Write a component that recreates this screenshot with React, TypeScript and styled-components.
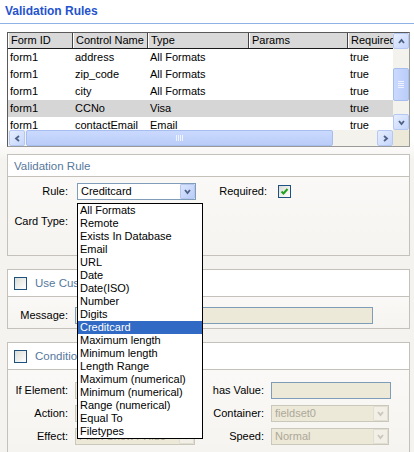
import React from "react";
import styled, { createGlobalStyle } from "styled-components";

const GlobalStyle = createGlobalStyle`
  body {
    margin: 0;
    background: #fff;
    font-family: "Liberation Sans", Arial, sans-serif;
    font-size: 11px;
    color: #000;
  }
`;

const columns = [
  { key: "formId", title: "Form ID", width: 65 },
  { key: "control", title: "Control Name", width: 75 },
  { key: "type", title: "Type", width: 101 },
  { key: "params", title: "Params", width: 99 },
  { key: "required", title: "Required", width: 70 },
];

const rows = [
  { formId: "form1", control: "address", type: "All Formats", params: "", required: "true" },
  { formId: "form1", control: "zip_code", type: "All Formats", params: "", required: "true" },
  { formId: "form1", control: "city", type: "All Formats", params: "", required: "true" },
  { formId: "form1", control: "CCNo", type: "Visa", params: "", required: "true", selected: true },
  { formId: "form1", control: "contactEmail", type: "Email", params: "", required: "true" },
];

const ruleOptions = [
  "All Formats",
  "Remote",
  "Exists In Database",
  "Email",
  "URL",
  "Date",
  "Date(ISO)",
  "Number",
  "Digits",
  "Creditcard",
  "Maximum length",
  "Minimum length",
  "Length Range",
  "Maximum (numerical)",
  "Minimum (numerical)",
  "Range (numerical)",
  "Equal To",
  "Filetypes",
];

const Page = styled.div`
  width: 414px;
  height: 452px;
  overflow: hidden;
  background: linear-gradient(#ffffff 0px, #ffffff 140px, #f4f3f0 160px);
`;

const Title = styled.div`
  height: 19px;
  padding: 4px 0 0 5px;
  border-bottom: 1px solid #8db2e3;
  font-size: 12px;
  font-weight: bold;
  line-height: 14px;
  color: #2553cc;
`;

const Content = styled.div`
  display: flex;
  flex-direction: column;
  padding: 8px 4px 0 7px;
`;

const TableBox = styled.div`
  height: 113px;
  display: grid;
  grid-template-columns: 1fr 16px;
  grid-template-rows: 1fr 16px;
  border: 1px solid #9a9a9a;
  border-top-color: #5a5a5a;
  border-left-color: #5a5a5a;
  background: #fff;
`;

const Viewport = styled.div`
  overflow: hidden;
`;

const HeadRow = styled.div`
  display: flex;
  height: 15px;
  border-bottom: 1px solid #1a1a1a;
`;

const HeadCell = styled.div<{ $w: number }>`
  flex: 0 0 ${(p) => p.$w}px;
  box-sizing: border-box;
  padding-left: 2px;
  background: #d9d9d9;
  border-left: 1px solid #fff;
  border-right: 1px solid #444;
  line-height: 15px;
  white-space: nowrap;
  overflow: hidden;
`;

const Row = styled.div<{ $selected?: boolean }>`
  display: flex;
  height: 17px;
  background: ${(p) => (p.$selected ? "#d6d6d6" : "#fff")};
`;

const Cell = styled.div<{ $w: number }>`
  flex: 0 0 ${(p) => p.$w}px;
  padding-left: 2px;
  box-sizing: border-box;
  line-height: 17px;
  white-space: nowrap;
  overflow: hidden;
`;

const ScrollTrack = styled.div<{ $vertical?: boolean }>`
  display: flex;
  flex-direction: ${(p) => (p.$vertical ? "column" : "row")};
  background: #f4f2ec;
`;

const ArrowButton = styled.div`
  flex: 0 0 16px;
  width: 16px;
  height: 16px;
  box-sizing: border-box;
  border: 1px solid #b5c8f3;
  border-radius: 2px;
  background: linear-gradient(135deg, #e6eefe, #c5d5fc);
  display: flex;
  align-items: center;
  justify-content: center;
`;

const Thumb = styled.div<{ $vertical?: boolean; $start: number; $size: number }>`
  box-sizing: border-box;
  ${(p) =>
    p.$vertical
      ? `margin-top: ${p.$start}px; height: ${p.$size}px; width: 16px;`
      : `margin-left: ${p.$start}px; width: ${p.$size}px; height: 16px;`}
  border: 1px solid #a7bdee;
  border-radius: 2px;
  background: ${(p) =>
    p.$vertical
      ? "linear-gradient(90deg, #cad9fe, #bacdf8)"
      : "linear-gradient(#cad9fe, #bacdf8)"};
  display: flex;
  align-items: center;
  justify-content: center;
`;

const Spacer = styled.div`
  flex: 1;
`;

const Corner = styled.div`
  background: #ece9d8;
`;

const Arrow = ({ dir, color = "#4d6185" }: { dir: "up" | "down" | "left" | "right"; color?: string }) => {
  const pts = {
    up: "2,6 4.5,3 7,6",
    down: "2,3 4.5,6 7,3",
    left: "6,2 3,4.5 6,7",
    right: "3,2 6,4.5 3,7",
  }[dir];
  return (
    <svg width="9" height="9" viewBox="0 0 9 9">
      <polyline points={pts} fill="none" stroke={color} strokeWidth="1.8" />
    </svg>
  );
};

const Grip = ({ vertical }: { vertical?: boolean }) => (
  <svg width="8" height="8" viewBox="0 0 8 8">
    {[1, 3, 5, 7].map((v) =>
      vertical ? (
        <line key={v} x1="1" x2="7" y1={v - 0.5} y2={v - 0.5} stroke="#eef3ff" strokeWidth="1" />
      ) : (
        <line key={v} y1="1" y2="7" x1={v - 0.5} x2={v - 0.5} stroke="#eef3ff" strokeWidth="1" />
      )
    )}
  </svg>
);

const Fieldset = styled.div<{ $gap: number }>`
  margin-top: ${(p) => p.$gap}px;
  border: 1px solid #c3c1b9;
  background: #fff;
`;

const FieldsetHead = styled.div<{ $h: number }>`
  height: ${(p) => p.$h}px;
  display: flex;
  align-items: center;
  gap: 8px;
  padding-left: 6px;
  border-bottom: 1px solid #c3c1b9;
  color: #56789d;
  font-size: 11.5px;
  white-space: nowrap;
`;

const FieldsetBody = styled.div<{ $h: number; $pt: number }>`
  height: ${(p) => p.$h}px;
  box-sizing: border-box;
  padding-top: ${(p) => p.$pt}px;
  background: linear-gradient(#faf9f7, #f6f4f0);
  display: flex;
  flex-direction: column;
`;

const FormRow = styled.div<{ $mb?: number }>`
  display: flex;
  align-items: center;
  height: 18px;
  margin-bottom: ${(p) => p.$mb ?? 0}px;
`;

const Label = styled.div<{ $w: number; $mr: number }>`
  width: ${(p) => p.$w}px;
  margin-right: ${(p) => p.$mr}px;
  text-align: right;
  white-space: nowrap;
`;

const SelectWrap = styled.div`
  position: relative;
`;

const SelectBox = styled.div<{ $w: number; $disabled?: boolean }>`
  width: ${(p) => p.$w}px;
  height: 17px;
  box-sizing: border-box;
  display: flex;
  align-items: center;
  border: 1px solid ${(p) => (p.$disabled ? "#cac8bb" : "#7f9db9")};
  background: ${(p) => (p.$disabled ? "#ece9d8" : "#fff")};
  color: ${(p) => (p.$disabled ? "#aca899" : "#000")};
  padding-left: 3px;
  white-space: nowrap;
  overflow: hidden;
`;

const SelectText = styled.div`
  flex: 1;
  overflow: hidden;
`;

const SelectButton = styled.div<{ $disabled?: boolean }>`
  flex: 0 0 15px;
  height: 15px;
  box-sizing: border-box;
  border: 1px solid ${(p) => (p.$disabled ? "#e0ded3" : "#b6c8f0")};
  border-radius: 1px;
  background: ${(p) =>
    p.$disabled ? "#f1efe6" : "linear-gradient(135deg, #dbe5fd, #b9cdf9)"};
  display: flex;
  align-items: center;
  justify-content: center;
`;

const TextInput = styled.div<{ $w: number }>`
  width: ${(p) => p.$w}px;
  height: 17px;
  box-sizing: border-box;
  border: 1px solid #7f9db9;
  background: #ece9d8;
`;

const Check = styled.div`
  width: 13px;
  height: 13px;
  box-sizing: border-box;
  border: 1px solid #1c5180;
  background: linear-gradient(135deg, #dcdcd6, #ffffff);
  display: flex;
  align-items: center;
  justify-content: center;
`;

const DropList = styled.div`
  position: absolute;
  top: 20px;
  left: 0;
  width: 126px;
  box-sizing: border-box;
  border: 1px solid #000;
  background: #fff;
  z-index: 10;
`;

const DropItem = styled.div<{ $active?: boolean }>`
  height: 13px;
  line-height: 13px;
  padding-left: 2px;
  white-space: nowrap;
  background: ${(p) => (p.$active ? "#316ac5" : "#fff")};
  color: ${(p) => (p.$active ? "#fff" : "#000")};
`;

const Select = ({ w, value, disabled }: { w: number; value: string; disabled?: boolean }) => (
  <SelectBox $w={w} $disabled={disabled}>
    <SelectText>{value}</SelectText>
    <SelectButton $disabled={disabled}>
      <Arrow dir="down" color={disabled ? "#c9c7bc" : "#4d6185"} />
    </SelectButton>
  </SelectBox>
);

export default function App() {
  return (
    <Page>
      <GlobalStyle />
      <Title>Validation Rules</Title>
      <Content>
        <TableBox>
          <Viewport>
            <HeadRow>
              {columns.map((c) => (
                <HeadCell key={c.key} $w={c.width}>
                  {c.title}
                </HeadCell>
              ))}
            </HeadRow>
            {rows.map((r, i) => (
              <Row key={i} $selected={r.selected}>
                {columns.map((c) => (
                  <Cell key={c.key} $w={c.width}>
                    {(r as Record<string, any>)[c.key]}
                  </Cell>
                ))}
              </Row>
            ))}
          </Viewport>
          <ScrollTrack $vertical>
            <ArrowButton>
              <Arrow dir="up" />
            </ArrowButton>
            <Thumb $vertical $start={19} $size={33}>
              <Grip vertical />
            </Thumb>
            <Spacer />
            <ArrowButton>
              <Arrow dir="down" />
            </ArrowButton>
          </ScrollTrack>
          <ScrollTrack>
            <ArrowButton style={{ marginLeft: 1 }}>
              <Arrow dir="left" />
            </ArrowButton>
            <Thumb $start={1} $size={307}>
              <Grip />
            </Thumb>
            <Spacer />
            <ArrowButton>
              <Arrow dir="right" />
            </ArrowButton>
          </ScrollTrack>
          <Corner />
        </TableBox>

        <Fieldset $gap={7}>
          <FieldsetHead $h={21}>Validation Rule</FieldsetHead>
          <FieldsetBody $h={78} $pt={5}>
            <FormRow $mb={12}>
              <Label $w={60} $mr={9}>
                Rule:
              </Label>
              <SelectWrap>
                <Select w={119} value="Creditcard" />
                <DropList>
                  {ruleOptions.map((o) => (
                    <DropItem key={o} $active={o === "Creditcard"}>
                      {o}
                    </DropItem>
                  ))}
                </DropList>
              </SelectWrap>
              <Label $w={71} $mr={11}>
                Required:
              </Label>
              <Check>
                <svg width="9" height="9" viewBox="0 0 9 9">
                  <polyline points="1.5,4.5 3.5,6.5 7.5,2" fill="none" stroke="#21a121" strokeWidth="2" />
                </svg>
              </Check>
            </FormRow>
            <FormRow>
              <Label $w={60} $mr={9}>
                Card Type:
              </Label>
              <Select w={119} value="" />
            </FormRow>
          </FieldsetBody>
        </Fieldset>

        <Fieldset $gap={13}>
          <FieldsetHead $h={26}>
            <Check />
            Use Custom Message
          </FieldsetHead>
          <FieldsetBody $h={31} $pt={9}>
            <FormRow>
              <Label $w={60} $mr={7}>
                Message:
              </Label>
              <TextInput $w={298} />
            </FormRow>
          </FieldsetBody>
        </Fieldset>

        <Fieldset $gap={13}>
          <FieldsetHead $h={26}>
            <Check />
            Conditional Rule
          </FieldsetHead>
          <FieldsetBody $h={82} $pt={11}>
            <FormRow $mb={5}>
              <Label $w={60} $mr={7}>
                If Element:
              </Label>
              <Select w={120} value="" disabled />
              <Label $w={69} $mr={7}>
                has Value:
              </Label>
              <TextInput $w={120} />
            </FormRow>
            <FormRow $mb={5}>
              <Label $w={60} $mr={7}>
                Action:
              </Label>
              <Select w={120} value="" disabled />
              <Label $w={69} $mr={7}>
                Container:
              </Label>
              <Select w={118} value="fieldset0" disabled />
            </FormRow>
            <FormRow>
              <Label $w={60} $mr={7}>
                Effect:
              </Label>
              <Select w={120} value="Plain Show / Hide" disabled />
              <Label $w={69} $mr={7}>
                Speed:
              </Label>
              <Select w={118} value="Normal" disabled />
            </FormRow>
          </FieldsetBody>
        </Fieldset>
      </Content>
    </Page>
  );
}
